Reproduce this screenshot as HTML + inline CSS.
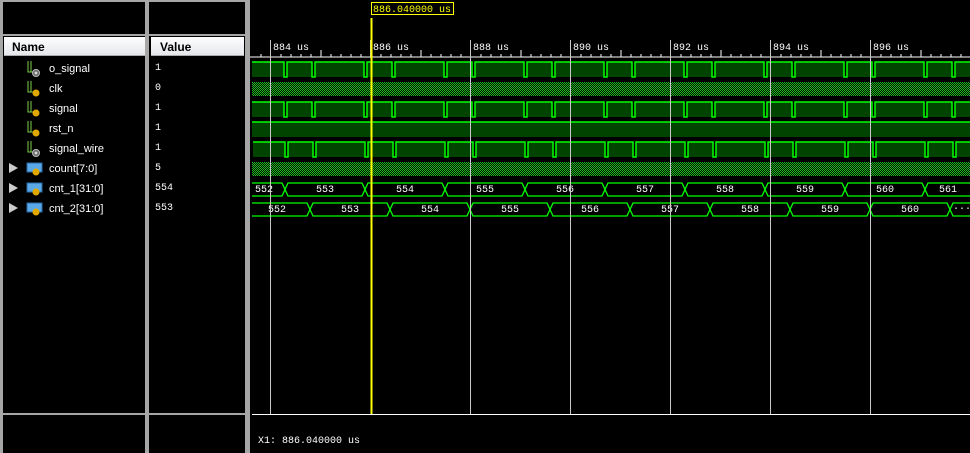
<!DOCTYPE html>
<html><head><meta charset="utf-8"><style>
html,body{margin:0;padding:0;background:#000;width:970px;height:453px;overflow:hidden;font-family:"Liberation Sans",Tahoma,sans-serif}
.abs{position:absolute}
.hdr{background:linear-gradient(#fff,#e4e6ea);color:#000;font-weight:bold;font-size:12px;height:19px;line-height:20px;border-bottom:1px solid #aaa}
.row{position:absolute;height:20px;line-height:20px;font-size:11px;color:#fff}
.val{font-family:"Liberation Mono",monospace;font-size:10px}
</style></head><body>
<div class="abs" style="left:0;top:0;width:3px;height:453px;background:#a6a6a6"></div>
<div class="abs" style="left:145px;top:0;width:4px;height:453px;background:#a6a6a6"></div>
<div class="abs" style="left:245px;top:0;width:5px;height:453px;background:#a6a6a6"></div>
<div class="abs" style="left:0;top:0;width:250px;height:2px;background:#a6a6a6"></div>
<div class="abs" style="left:0;top:413px;width:250px;height:2px;background:#a6a6a6"></div>
<div class="abs" style="left:0;top:34px;width:250px;height:2px;background:#a6a6a6"></div>
<div class="abs hdr" style="left:4px;top:37px;width:141px;padding-left:8px;box-sizing:border-box">Name</div>
<div class="abs hdr" style="left:151px;top:37px;width:93px;padding-left:9px;box-sizing:border-box">Value</div>

<svg class="abs" style="left:0;top:0" width="250" height="453">
<defs>
<g id="bit"><path d="M28 61V72H31M31 61V72H33" stroke="#7fd04a" fill="none" stroke-width="1"/><circle cx="36" cy="73" r="3.5" fill="#666" stroke="#bbb"/><path d="M34.5 73H37.5M36 71.5V74.5" stroke="#fff"/></g>
<g id="bitY"><path d="M28 61V72H31M31 61V72H33" stroke="#7fd04a" fill="none"/><circle cx="36" cy="73" r="3.5" fill="#e0a800"/></g>
<g id="bus"><rect x="27" y="163" width="15" height="9" fill="#5aa8e6" stroke="#2a6aa8"/><circle cx="36" cy="172" r="3.5" fill="#e0a800"/><path d="M9 163L18 168L9 173Z" fill="#ccc"/></g>
</defs>
<use href="#bit"/>
<use href="#bitY" y="20"/>
<use href="#bitY" y="40"/>
<use href="#bitY" y="60"/>
<use href="#bit" y="80"/>
<use href="#bus"/>
<use href="#bus" y="20"/>
<use href="#bus" y="40"/>
</svg>
<div class="row" style="left:49px;top:59px">o_signal</div>
<div class="row" style="left:49px;top:79px">clk</div>
<div class="row" style="left:49px;top:99px">signal</div>
<div class="row" style="left:49px;top:119px">rst_n</div>
<div class="row" style="left:49px;top:139px">signal_wire</div>
<div class="row" style="left:49px;top:159px">count[7:0]</div>
<div class="row" style="left:49px;top:179px">cnt_1[31:0]</div>
<div class="row" style="left:49px;top:199px">cnt_2[31:0]</div>
<div class="row val" style="left:155px;top:59px">1</div>
<div class="row val" style="left:155px;top:79px">0</div>
<div class="row val" style="left:155px;top:99px">1</div>
<div class="row val" style="left:155px;top:119px">1</div>
<div class="row val" style="left:155px;top:139px">1</div>
<div class="row val" style="left:155px;top:159px">5</div>
<div class="row val" style="left:155px;top:179px">554</div>
<div class="row val" style="left:155px;top:199px">553</div>

<svg class="abs" style="left:0;top:0" width="970" height="453" font-family="Liberation Mono, monospace" font-size="10">
<defs>
<pattern id="chk" width="2" height="2" patternUnits="userSpaceOnUse"><rect width="1" height="1" fill="#1ec81e"/><rect x="1" y="1" width="1" height="1" fill="#1ec81e"/></pattern>
<g id="pul">
<path d="M252 62H284V77H287V62H312V77H315V62H364V77H367V62H392V77H395V62H444V77H447V62H472V77H475V62H524V77H527V62H552V77H555V62H604V77H607V62H632V77H635V62H684V77H687V62H712V77H715V62H764V77H767V62H792V77H795V62H844V77H847V62H872V77H875V62H924V77H927V62H952V77H955V62H970V77H252Z" fill="#004400"/>
<path d="M252 62H284V77H287V62H312V77H315V62H364V77H367V62H392V77H395V62H444V77H447V62H472V77H475V62H524V77H527V62H552V77H555V62H604V77H607V62H632V77H635V62H684V77H687V62H712V77H715V62H764V77H767V62H792V77H795V62H844V77H847V62H872V77H875V62H924V77H927V62H952V77H955V62H970" fill="none" stroke="#00ff00" stroke-width="1.5"/>
</g>
</defs>
<line x1="250" y1="57" x2="970" y2="57" stroke="#fff"/>
<g stroke="#fff">
<path d="M261 54V57M281 54V57M291 54V57M301 54V57M311 54V57M331 54V57M341 54V57M351 54V57M361 54V57M381 54V57M391 54V57M401 54V57M411 54V57M431 54V57M441 54V57M451 54V57M461 54V57M481 54V57M491 54V57M501 54V57M511 54V57M531 54V57M541 54V57M551 54V57M561 54V57M581 54V57M591 54V57M601 54V57M611 54V57M631 54V57M641 54V57M651 54V57M661 54V57M681 54V57M691 54V57M701 54V57M711 54V57M731 54V57M741 54V57M751 54V57M761 54V57M781 54V57M791 54V57M801 54V57M811 54V57M831 54V57M841 54V57M851 54V57M861 54V57M881 54V57M891 54V57M901 54V57M911 54V57M931 54V57M941 54V57M951 54V57M961 54V57"/>
<path d="M321 50V57M421 50V57M521 50V57M621 50V57M721 50V57M821 50V57M921 50V57"/>
</g>
<g fill="#fff"><text x="273" y="50">884 us</text><text x="373" y="50">886 us</text><text x="473" y="50">888 us</text><text x="573" y="50">890 us</text><text x="673" y="50">892 us</text><text x="773" y="50">894 us</text><text x="873" y="50">896 us</text></g>
<use href="#pul"/>
<rect x="252" y="82" width="718" height="14" fill="url(#chk)"/>
<use href="#pul" y="40"/>
<rect x="252" y="122" width="718" height="15" fill="#004400"/><line x1="252" y1="122" x2="970" y2="122" stroke="#00ff00" stroke-width="1.5"/>
<use href="#pul" x="1" y="80"/>
<rect x="252" y="162" width="718" height="14" fill="url(#chk)"/>
<g fill="none" stroke="#00ff00" stroke-width="1.3">
<path d="M252 183H282L288 196H362L368 183H442L448 196H522L528 183H602L608 196H682L688 183H762L768 196H842L848 183H922L928 196H970"/>
<path d="M252 196H282L288 183H362L368 196H442L448 183H522L528 196H602L608 183H682L688 196H762L768 183H842L848 196H922L928 183H970"/>
<path d="M252 203H307L313 216H387L393 203H467L473 216H547L553 203H627L633 216H707L713 203H787L793 216H867L873 203H947L953 216H970"/>
<path d="M252 216H307L313 203H387L393 216H467L473 203H547L553 216H627L633 203H707L713 216H787L793 203H867L873 216H947L953 203H970"/>
</g>
<g fill="#fff" text-anchor="middle">
<text x="264" y="192">552</text><text x="325" y="192">553</text><text x="405" y="192">554</text><text x="485" y="192">555</text><text x="565" y="192">556</text><text x="645" y="192">557</text><text x="725" y="192">558</text><text x="805" y="192">559</text><text x="885" y="192">560</text><text x="948" y="192">561</text>
<text x="277" y="212">552</text><text x="350" y="212">553</text><text x="430" y="212">554</text><text x="510" y="212">555</text><text x="590" y="212">556</text><text x="670" y="212">557</text><text x="750" y="212">558</text><text x="830" y="212">559</text><text x="910" y="212">560</text><text x="962" y="211">···</text>
</g>
<g stroke="#c8c8c8" stroke-width="1"><path d="M270.5 40V414M470.5 40V414M570.5 40V414M670.5 40V414M770.5 40V414M870.5 40V414M370.5 40V58"/></g>
<line x1="252" y1="414.5" x2="970" y2="414.5" stroke="#fff"/>
<rect x="370.5" y="18" width="2" height="396" fill="#ffff00"/>
<rect x="371.5" y="2.5" width="82" height="12" fill="#000" stroke="#ffff00"/>
<text x="373" y="12" fill="#ffff00" font-size="10">886.040000 us</text>
<text x="258" y="443" fill="#fff" font-size="10">X1: 886.040000 us</text>
</svg>
</body></html>
